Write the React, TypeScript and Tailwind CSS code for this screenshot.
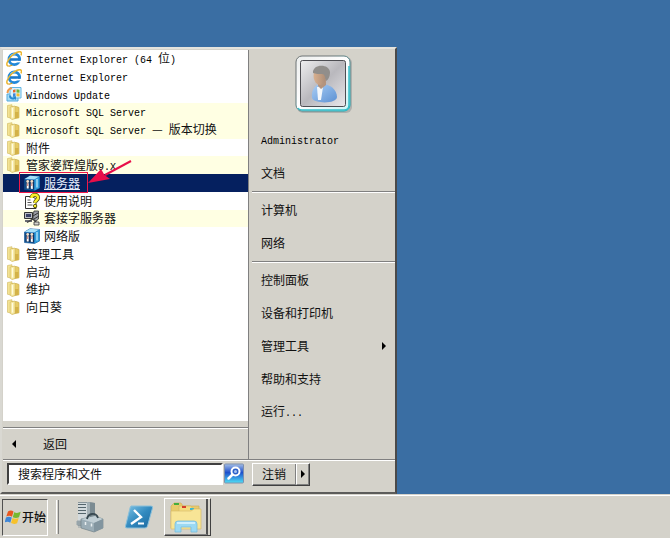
import React from 'react';
import clsx from 'clsx';

type IconName = 'ie' | 'update' | 'folder' | 'app' | 'help' | 'socket';

interface ProgramItem {
  label: string;
  icon: IconName;
  nested?: boolean;
  isNew?: boolean;
  selected?: boolean;
}

const programs: ProgramItem[] = [
  { label: 'Internet Explorer (64 位)', icon: 'ie' },
  { label: 'Internet Explorer', icon: 'ie' },
  { label: 'Windows Update', icon: 'update' },
  { label: 'Microsoft SQL Server', icon: 'folder', isNew: true },
  { label: 'Microsoft SQL Server — 版本切换', icon: 'folder', isNew: true },
  { label: '附件', icon: 'folder' },
  { label: '管家婆辉煌版9.X', icon: 'folder', isNew: true },
  { label: '服务器', icon: 'app', nested: true, selected: true },
  { label: '使用说明', icon: 'help', nested: true },
  { label: '套接字服务器', icon: 'socket', nested: true, isNew: true },
  { label: '网络版', icon: 'app', nested: true },
  { label: '管理工具', icon: 'folder' },
  { label: '启动', icon: 'folder' },
  { label: '维护', icon: 'folder' },
  { label: '向日葵', icon: 'folder' },
];

const placeGroups: string[][] = [
  ['Administrator', '文档'],
  ['计算机', '网络'],
  ['控制面板', '设备和打印机', '管理工具', '帮助和支持', '运行...'],
];

// Latin runs are set in a half-width mono face next to the 12px Chinese text
const Label: React.FC<{ text: string }> = ({ text }) => (
  <span className="whitespace-pre">
    {text.split(/([\x20-\x7e]+)/).map((part, i) =>
      /^[\x20-\x7e]+$/.test(part) ? (
        <span key={i} className="font-['Liberation_Mono',monospace] text-[10px] text-black">
          {part}
        </span>
      ) : (
        part
      ),
    )}
  </span>
);

const ProgramIcon: React.FC<{ name: IconName }> = ({ name }) => {
  const cls = 'h-4 w-4 shrink-0';
  switch (name) {
    case 'ie':
      return (
        <svg viewBox="0 0 16 16" className={cls} aria-hidden="true">
          <circle cx="8.300" cy="8.300" r="5.300" fill="none" stroke="#2188d8" strokeWidth="2.800" />
          <path d="M4 7.200h10.500v2.600H4z" fill="#1c78ca" />
          <path d="M10.500 9.900H16v1.500h-5.500z" fill="#fff" />
          <path d="M4.500 5.200a5 5 0 0 1 5-2.200" fill="none" stroke="#8ed6fa" strokeWidth="1.200" />
          <path
            d="M2.600 15C-.6 15 .8 9.800 5 5.500 9 1.500 14 -.4 15.200 1.400c.5.800.3 1.800-.3 3"
            fill="none"
            stroke="#eab530"
            strokeWidth="1.500"
          />
          <path d="M2.600 15c1.200.200 2.400-.2 3.600-1" fill="none" stroke="#cf9a24" strokeWidth="1.200" />
        </svg>
      );
    case 'update':
      return (
        <svg viewBox="0 0 16 16" className={cls} aria-hidden="true">
          <path d="M1 8h11v7H1z" fill="#a6dcf5" stroke="#55a9dc" />
          <path d="M4 1.500h11V12H4z" fill="#d9f1fc" stroke="#62b4e2" />
          <path d="m7 4 2.500-.7v3L7 6.600z" fill="#e8662c" />
          <path d="m10.500 3.300 3 .4v3l-3-.3z" fill="#6fb53a" />
          <path d="m7 7.500 2.500-.3v3L7 10.300z" fill="#3f86d6" />
          <path d="m10.500 7.200 3 .4v3l-3-.4z" fill="#f4bd2b" />
          <path d="M3 9.500a4 4 0 0 0 6 3.500l1 1.200v-4H6.500l1.200 1.500A2.400 2.400 0 0 1 5 9.500z" fill="#2788d0" />
          <path d="M1.500 7A5 5 0 0 1 6 2.300" fill="none" stroke="#f09a48" strokeWidth="2" />
        </svg>
      );
    case 'folder':
      return (
        <svg viewBox="0 0 16 16" className={cls} aria-hidden="true">
          <path d="M1.500 1.500 6 .7v13.600l-4.500-1z" fill="#f3e394" stroke="#cfb65a" strokeWidth=".6" />
          <path d="M6 2.500h4.500l2.500 1v10.300L6 15z" fill="#e6cb66" stroke="#c6a845" strokeWidth=".6" />
          <path d="m4.200 3 4.800-1v12.500l-3 1-1.800-1.200z" fill="#f7eaa6" stroke="#d0b658" strokeWidth=".6" />
          <path d="M9 8h3.500v6L9 14.600z" fill="#d3b248" />
          <path d="M6.500 4v9.500" stroke="#fffbe0" />
        </svg>
      );
    case 'app':
      return (
        <svg viewBox="0 0 16 16" className={cls} aria-hidden="true">
          <path d="M.5 4 6 .8 15.500 1.500v11.500L10.500 15.500.5 14.500z" fill="#1763ad" stroke="#0a4c86" strokeWidth=".6" />
          <path d="m.5 4 5.500-3.200 9.500.7-5 3z" fill="#a5dff8" />
          <path d="m10.500 4.500 5-3v11.500l-5 2.500z" fill="#2f9bd9" />
          <path d="M1.500 5h8.500v9.500l-8.500-.8z" fill="#12335e" />
          <circle cx="3.700" cy="6.500" r="1.400" fill="#f3dfc8" />
          <circle cx="7.800" cy="6.500" r="1.400" fill="#f3dfc8" />
          <path d="M2.700 8.300h2v5.300l-2-.2zM6.800 8.300h2v5.700l-2-.2z" fill="#fff" />
          <path d="M3.700 8.300V11M7.800 8.300V11" stroke="#c9533f" strokeWidth=".8" />
          <path d="M13 4v8.500" stroke="#c8efff" strokeWidth="1.200" />
        </svg>
      );
    case 'help':
      return (
        <svg viewBox="0 0 16 16" className={cls} aria-hidden="true">
          <path d="M1.500 3.500H9l3 3v9H1.500z" fill="#fff" stroke="#333" />
          <path d="M3.500 7h3M3.500 9.500h4M3.500 12h5" stroke="#555" />
          <path
            d="M7.500 5C7.500.9 14 .9 14 4.700c0 2.600-2.900 2.600-2.900 5.100"
            fill="none"
            stroke="#3c3900"
            strokeWidth="4"
          />
          <path
            d="M7.500 5C7.500.9 14 .9 14 4.700c0 2.600-2.900 2.600-2.900 5.100"
            fill="none"
            stroke="#f7ef2c"
            strokeWidth="2.600"
          />
          <circle cx="11.100" cy="13" r="1.700" fill="#f7ef2c" stroke="#3c3900" strokeWidth=".8" />
        </svg>
      );
    case 'socket':
      return (
        <svg viewBox="0 0 16 16" className={cls} aria-hidden="true">
          <path d="M.5 2.500h8v6h-8z" fill="#b9bcc4" stroke="#333" />
          <path d="M2 4h5v3H2z" fill="#3b4266" />
          <path d="M1 10h7v2H1z" fill="#6b6d75" />
          <path d="M3 12.500 9 9l5 5.500" fill="none" stroke="#444" strokeWidth="1.400" />
          <path d="M10 1h4.500v8L12 11l-3-2V5z" fill="#9a9da5" stroke="#333" strokeWidth=".8" />
          <path d="m9 6 5-3M10 9l5-3" stroke="#333" />
          <path d="M10 12h5v3h-5z" fill="#d5d5cf" stroke="#333" strokeWidth=".8" />
        </svg>
      );
  }
};

const ProgramRow: React.FC<{ item: ProgramItem }> = ({ item }) => (
  <li className="relative min-h-0">
    <button
      type="button"
      className={clsx(
        'flex h-full w-full items-center text-left',
        item.nested ? 'gap-1 pl-[21px]' : 'gap-1 pl-[3px]',
        item.selected && 'bg-[#05205f] text-[#e4ecfa] underline',
        item.isNew && 'bg-[#ffffe3]',
      )}
    >
      <ProgramIcon name={item.icon} />
      <Label text={item.label} />
    </button>
    {item.selected && (
      <>
        <span className="pointer-events-none absolute -top-0.5 -bottom-px left-4 w-[69px] border border-[#f01848]" />
        <svg
          viewBox="0 0 46 26"
          className="pointer-events-none absolute -top-4 left-[84px] z-10 h-[26px] w-[46px]"
          aria-hidden="true"
        >
          <path d="M44 3 18 17" stroke="#e80e49" strokeWidth="2" />
          <path d="M1 25 14 11l3.500 6 5.500 4z" fill="#e80e49" />
        </svg>
      </>
    )}
  </li>
);

const UserPicture: React.FC = () => (
  <svg viewBox="0 0 60 60" className="h-[60px] w-[60px]" aria-hidden="true">
    <defs>
      <linearGradient id="frame" x1="0" y1="0" x2="1" y2="1">
        <stop offset="0" stopColor="#eceeed" />
        <stop offset=".5" stopColor="#fff" />
        <stop offset="1" stopColor="#c9f4f5" />
      </linearGradient>
      <linearGradient id="photo" x1="0" y1="0" x2="1" y2="1">
        <stop offset="0" stopColor="#eeeeef" />
        <stop offset=".5" stopColor="#b9b8bd" />
        <stop offset="1" stopColor="#e9e8eb" />
      </linearGradient>
      <linearGradient id="rim" x1="0" y1="0" x2="1" y2="1">
        <stop offset=".3" stopColor="#6d7475" />
        <stop offset="1" stopColor="#15a9b4" />
      </linearGradient>
      <linearGradient id="shirt" x1="0" y1="0" x2="1" y2="1">
        <stop offset="0" stopColor="#a9cef5" />
        <stop offset="1" stopColor="#5d91d3" />
      </linearGradient>
      <linearGradient id="face" x1="0" y1="0" x2="1" y2="0">
        <stop offset="0" stopColor="#d9b08f" />
        <stop offset="1" stopColor="#a98b76" />
      </linearGradient>
    </defs>
    <rect x="3" y="3" width="55" height="56" rx="6" fill="#96999a" opacity=".6" />
    <rect x="2" y="2" width="54" height="55" rx="6" fill="url(#frame)" stroke="url(#rim)" />
    <path d="M4 54q1 2 4 2h42q5 0 5-5V12" fill="none" stroke="#35bfca" strokeWidth="1.500" />
    <rect x="6.500" y="6.500" width="45" height="46" rx="2" fill="url(#photo)" stroke="#4d4d52" />
    <path d="M18 44c-1-8 3-13 8-14 9-1 17 5 17 13 0 7-23 7-25 1z" fill="url(#shirt)" />
    <path d="M23 33h6l-2 13h-3z" fill="#f3f7fb" />
    <path d="M24 26h8v5l-5 4-3-3z" fill="#b4947e" />
    <ellipse cx="26" cy="22" rx="6.500" ry="9" fill="url(#face)" />
    <path d="M19 19c-1-9 16-10 17-1 0 5-2 8-4 9-1-4-1-7-4-7s-6 0-9-1z" fill="#918e8b" />
  </svg>
);

const PlacesColumn: React.FC = () => (
  <nav className="flex w-[147px] shrink-0 flex-col border-l border-[#808080] pl-[3px]" aria-label="位置">
    <div className="flex h-[73px] items-start justify-center pt-1">
      <UserPicture />
    </div>
    {placeGroups.map((group, i) => (
      <ul
        key={group[0]}
        className={clsx('flex flex-col', i > 0 && 'mt-0.5 border-t border-[#808080] pt-px shadow-[inset_0_1px_0_#fff]')}
      >
        {group.map((label) => (
          <li key={label}>
            <button type="button" className="flex h-[33px] w-full items-center justify-between px-[9px] text-left">
              <Label text={label} />
              {label === '管理工具' && (
                <svg viewBox="0 0 4 8" className="h-2 w-1" aria-hidden="true">
                  <path d="M0 0 4 4 0 8z" fill="#000" />
                </svg>
              )}
            </button>
          </li>
        ))}
      </ul>
    ))}
  </nav>
);

const StartMenu: React.FC = () => (
  <section
    aria-label="开始菜单"
    className="flex w-[397px] flex-col border-2 border-t-[#e4e3dd] border-r-[#4a4a4a] border-b-[#5c5c5a] border-l-[#d9d8d2] bg-[#d4d2ca] pt-px pl-px"
  >
    <div className="flex">
      <div className="flex flex-1 flex-col">
        <div className="h-[371px] bg-white">
          <ul className="grid h-[266px] auto-rows-fr">
            {programs.map((item, i) => (
              <ProgramRow key={i} item={item} />
            ))}
          </ul>
        </div>
        <div className="mt-1.5 flex h-8 border-t border-[#808080] shadow-[inset_0_1px_0_#fff]">
          <button type="button" className="flex w-full items-center gap-[27px] pl-[9px]">
            <svg viewBox="0 0 4 8" className="h-2 w-1" aria-hidden="true">
              <path d="M4 0 0 4l4 4z" fill="#000" />
            </svg>
            返回
          </button>
        </div>
      </div>
      <PlacesColumn />
    </div>
    <div className="flex h-[33px] items-start border-t border-[#808080] pt-[3px] pl-1 shadow-[inset_0_1px_0_#fff]">
      <input
        type="text"
        aria-label="搜索程序和文件"
        defaultValue="搜索程序和文件"
        className="h-[22px] w-[216px] border-2 border-t-[#404040] border-r-white border-b-white border-l-[#404040] bg-white px-[9px] pb-0.5 outline-none"
      />
      <button type="button" aria-label="搜索" className="ml-px h-[21px] w-5">
        <svg viewBox="0 0 20 20" className="h-full w-full" aria-hidden="true">
          <defs>
            <linearGradient id="search" x1="0" y1="0" x2="0" y2="1">
              <stop offset="0" stopColor="#a5bfe6" />
              <stop offset=".45" stopColor="#1d4fcc" />
              <stop offset="1" stopColor="#4fe0f5" />
            </linearGradient>
          </defs>
          <rect x=".5" y=".5" width="19" height="19" rx="1" fill="url(#search)" stroke="#7d8fae" />
          <circle cx="11.500" cy="8" r="4" fill="#2c5fc9" stroke="#fff" strokeWidth="2" />
          <circle cx="11.500" cy="8" r="1.500" fill="#a9c4f0" />
          <path d="M8.500 11 4.500 15" stroke="#fff" strokeWidth="2.500" strokeLinecap="round" />
        </svg>
      </button>
      <div className="ml-2 flex h-[23px] border border-t-white border-r-[#404040] border-b-[#404040] border-l-white">
        <button type="button" className="w-[43px] border-r border-b border-[#808080]">
          注销
        </button>
        <button
          type="button"
          aria-label="关机选项"
          className="flex w-[13px] items-center justify-center border-r border-b border-l border-[#808080] border-l-white"
        >
          <svg viewBox="0 0 4 8" className="h-2 w-1" aria-hidden="true">
            <path d="M0 0 4 4 0 8z" fill="#000" />
          </svg>
        </button>
      </div>
    </div>
  </section>
);

const Taskbar: React.FC = () => (
  <footer className="flex h-[44px] items-center border-t border-[#d4d2ca] bg-[#d4d2ca] pt-px pl-0.5 shadow-[inset_0_1px_0_#fff]">
    <button
      type="button"
      className="flex h-[37px] w-[46px] items-center gap-px border border-t-[#505050] border-r-white border-b-white border-l-[#505050] pl-0.5 font-medium"
    >
      <svg viewBox="0 0 16 16" className="h-4 w-4 shrink-0" aria-hidden="true">
        <path d="M3 2.500C5 1 7 1.200 8.500 2.600L7 7.800C5 6.600 3.400 6.600 1.300 7.600z" fill="#e9571f" />
        <path d="M9.200 3.200c1.800 1 4 1 6.500-.4l-1.700 5.500c-2 1-4.200.9-6.200 0z" fill="#76b82f" />
        <path d="M1 8.400c2-.9 4-.8 5.800.2l-1.500 5.200C3.400 12.500 2 12.400-.4 13.500z" fill="#3f86d6" />
        <path d="M7.500 9c1.900.9 3.900 1 6.200 0l-1.600 5.200c-2 1-4.200.9-6.100-.1z" fill="#f7c22c" />
      </svg>
      <span className="whitespace-nowrap">开始</span>
    </button>
    <span className="ml-2 h-[34px] w-[3px] border-r border-l border-r-[#808080] border-l-white" />

    <button type="button" aria-label="服务器管理器" className="ml-4">
      <svg viewBox="0 0 32 32" className="h-8 w-8" aria-hidden="true">
        <path d="M3 1h11l6 1v20l-5 3H3z" fill="#8b969b" />
        <path d="M3 2h9v21H3z" fill="#d3dadd" />
        <path d="M3 3.500h8M3 6.500h8M3 9.500h8M3 12.500h8" stroke="#55656c" strokeWidth="1.200" />
        <path d="M12 1l8 1v20l-8 2z" fill="#7b8b92" />
        <path d="M12 1l3 .4V23l-3 1z" fill="#a4b0b5" />
        <path d="M2 20h4v4H2zM3 26h4" fill="#97a4aa" stroke="#97a4aa" />
        <path d="m6 18 14-3 8 3v9l-9 4-13-4z" fill="#9badb6" stroke="#687980" strokeWidth=".6" />
        <path d="m6 18 14-3 8 3-9 4z" fill="#c0ced4" />
        <path d="m19 22 9-4v9l-9 4z" fill="#82959f" />
        <path d="M12 18c1-6 9-7 11-1" fill="none" stroke="#394a52" strokeWidth="1.800" />
        <path d="M10.500 21v3M16.500 22.500v3" stroke="#e8eef0" strokeWidth="1.500" />
      </svg>
    </button>
    <button type="button" aria-label="Windows PowerShell" className="ml-[18px]">
      <svg viewBox="0 0 28 24" className="h-6 w-7" aria-hidden="true">
        <defs>
          <linearGradient id="shell" x1="0" y1="0" x2="1" y2="1">
            <stop offset="0" stopColor="#80c4e6" />
            <stop offset=".5" stopColor="#328abf" />
            <stop offset="1" stopColor="#1c679d" />
          </linearGradient>
        </defs>
        <path d="M6 1h20q2 0 1.500 2l-5 18q-.5 2-2.500 2H2q-2 0-1.500-2L5 3q.5-2 1-2z" fill="url(#shell)" stroke="#8bc0da" />
        <path d="m9 5 7 7-10 7" fill="none" stroke="#fff" strokeWidth="2.400" />
        <path d="M13 18.500h6" stroke="#fff" strokeWidth="2" />
      </svg>
    </button>
    <button
      type="button"
      aria-label="Windows 资源管理器"
      className="ml-[11px] flex h-[38px] w-[47px] border border-t-white border-r-[#404040] border-b-[#404040] border-l-white"
    >
      <span className="flex h-full flex-1 items-center justify-center border-r-2 border-b border-r-[#505050] border-b-[#808080]">
        <svg viewBox="0 0 34 32" className="h-8 w-[34px]" aria-hidden="true">
          <path d="M2 5 5 2h7l2 3h16v22H2z" fill="#e9cb6a" stroke="#cdb062" strokeWidth=".7" />
          <path d="M5 3h5" stroke="#45ad3d" strokeWidth="2" />
          <path d="M10 5h12l2 3h7v18H10z" fill="#f4dc80" stroke="#d3b766" strokeWidth=".7" />
          <path d="M13 6h4" stroke="#d5402c" strokeWidth="2" />
          <path d="M21 8h4" stroke="#3eb8cf" strokeWidth="2" />
          <path d="M2 10h20l3-2h7v20H2z" fill="#f8e596" stroke="#d8bd6d" strokeWidth=".7" />
          <path d="M6 31v-8q0-3 3-3h16q3 0 3 3v8h-6v-5H12v5z" fill="#9bd9f3" stroke="#78bcdc" strokeWidth=".8" />
          <path d="M8 22h18" stroke="#e1f6ff" strokeWidth="1.500" />
        </svg>
      </span>
      <span className="h-full w-0.5" />
    </button>
  </footer>
);

export default function App() {
  return (
    <div className="flex min-h-screen flex-col bg-[#3a6ea3] font-['Noto_Sans_CJK_SC',sans-serif] text-xs text-[#111]">
      <main className="flex flex-1 items-end">
        <StartMenu />
      </main>
      <Taskbar />
    </div>
  );
}
